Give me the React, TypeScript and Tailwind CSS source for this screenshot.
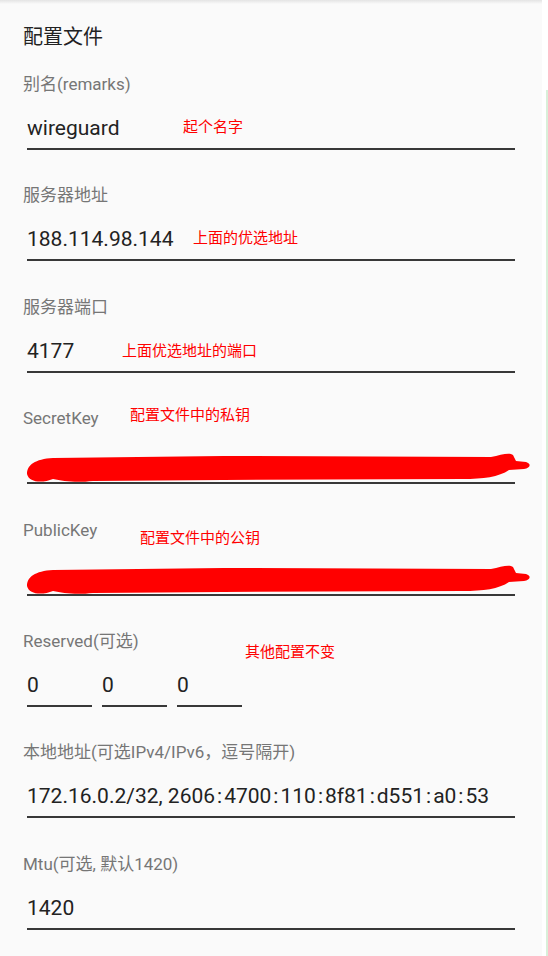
import React from "react";

const cjk = { fontFamily: 'Roboto, "Noto Sans CJK SC", sans-serif' };
const note = { fontFamily: '"Noto Sans CJK SC", "Noto Sans", sans-serif' };

type Field = {
  label: string;
  value?: string;
  note?: string;
  noteX?: number;
  noteTop?: number;
  scribble?: boolean;
};

const fields: Field[] = [
  { label: "别名(remarks)", value: "wireguard", note: "起个名字", noteX: 183, noteTop: 44 },
  { label: "服务器地址", value: "188.114.98.144", note: "上面的优选地址", noteX: 193, noteTop: 44 },
  { label: "服务器端口", value: "4177", note: "上面优选地址的端口", noteX: 122, noteTop: 45 },
  { label: "SecretKey", note: "配置文件中的私钥", noteX: 130, noteTop: -2, scribble: true },
  { label: "PublicKey", note: "配置文件中的公钥", noteX: 140, noteTop: 9, scribble: true },
];

// red marker strokes hiding the keys
const Scribble = () => (
  <svg className="absolute left-0 top-0" width="530" height="36" viewBox="0 0 530 36">
    <path
      d="M4 22 C4 13 12 7 30 6 L200 4 L468 5 C478 3 486 0 490 3 L493 9 L503 10 C509 12 507 16 501 17 L486 18 C476 25 460 27 440 27 L200 28 L70 29 C52 31 40 29 30 27 C20 31 6 31 4 22 Z"
      fill="#ff0000"
    />
  </svg>
);

const withColons = (text?: string) => {
  if (!text || !text.includes(":")) return text;
  return text.split(":").map((part, i) => (
    <React.Fragment key={i}>
      {i > 0 && <span className="mx-[2px]">:</span>}
      {part}
    </React.Fragment>
  ));
};

const Value = ({ text, width }: { text?: string; width: string }) => (
  <div
    className={`${width} h-[38px] border-b-2 border-[#383838] text-[21px] leading-[32px] text-[#222] whitespace-nowrap overflow-hidden`}
  >
    {withColons(text)}
  </div>
);

const Label = ({ children }: { children: React.ReactNode }) => (
  <div className="h-[24px] leading-[24px] text-[17px] text-[#767676]">{children}</div>
);

export default function App() {
  return (
    <div className="w-[548px] h-[956px] bg-white flex overflow-hidden" style={cjk}>
      <div className="w-[542px] h-full bg-[#fafafa] relative">
        <div className="h-[4px] bg-gradient-to-b from-[#e4e4e4] to-[#fafafa]" />
        <div className="pl-[23px] pr-[27px]">
          <h1 className="mt-[19px] h-[28px] leading-[28px] text-[20px] text-[#222]">配置文件</h1>
          <div className="mt-[21px] flex flex-col gap-[33.4px]">
            {fields.map((f) => (
              <div key={f.label} className="relative">
                <Label>{f.label}</Label>
                <div className="mt-[16px] pl-[4px]">
                  <Value text={f.value} width="w-[488px]" />
                </div>
                {f.scribble && (
                  <div className="absolute left-0 top-[46px]">
                    <Scribble />
                  </div>
                )}
                {f.note && (
                  <span
                    className="absolute text-[15px] leading-[20px] text-[#ff0000] whitespace-nowrap"
                    style={{ ...note, left: (f.noteX ?? 0) - 23, top: f.noteTop }}
                  >
                    {f.note}
                  </span>
                )}
              </div>
            ))}
            <div className="relative">
              <Label>Reserved(可选)</Label>
              <div className="mt-[16px] pl-[4px] flex gap-[10px]">
                <Value text="0" width="w-[65px]" />
                <Value text="0" width="w-[65px]" />
                <Value text="0" width="w-[65px]" />
              </div>
              <span
                className="absolute left-[222px] top-[12px] text-[15px] leading-[20px] text-[#ff0000]"
                style={note}
              >
                其他配置不变
              </span>
            </div>
            <div>
              <Label>本地地址(可选IPv4/IPv6，逗号隔开)</Label>
              <div className="mt-[16px] pl-[4px]">
                <Value text="172.16.0.2/32, 2606:4700:110:8f81:d551:a0:53" width="w-[488px]" />
              </div>
            </div>
            <div>
              <Label>Mtu(可选, 默认1420)</Label>
              <div className="mt-[16px] pl-[4px]">
                <Value text="1420" width="w-[488px]" />
              </div>
            </div>
          </div>
        </div>
      </div>
      <div className="w-[6px] h-full flex justify-end">
        <div className="mt-[90px] w-[2px] bg-[#d9efd9]" />
      </div>
    </div>
  );
}
